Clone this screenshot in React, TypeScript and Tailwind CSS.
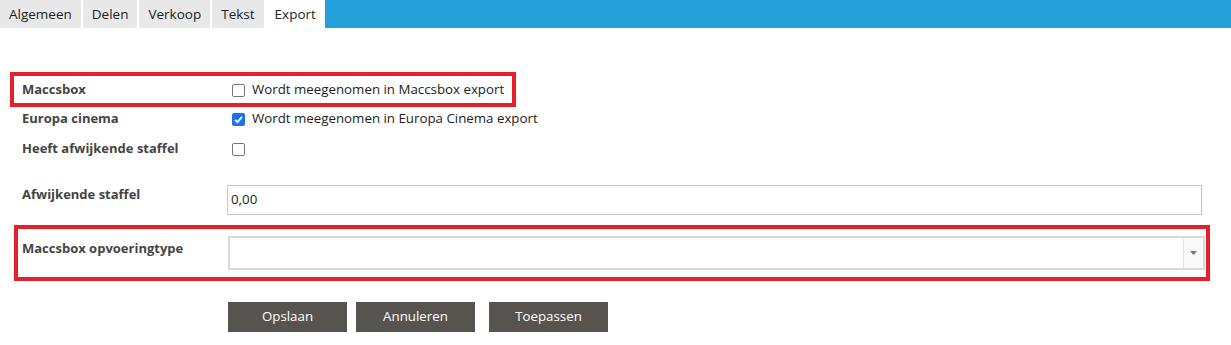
import React from "react";

const font = { fontFamily: '"Open Sans", "Noto Sans", sans-serif' };

function Tab({ label, active }: { label: string; active?: boolean }) {
  return (
    <div
      className={
        "h-full flex items-center text-[13.5px] text-[#222] " +
        (active ? "bg-white px-[9px]" : "bg-[#e8e8e8] px-[9px] border-r-2 border-white")
      }
    >
      {label}
    </div>
  );
}

function Checkbox({ checked }: { checked?: boolean }) {
  return checked ? (
    <span className="w-[13px] h-[13px] rounded-[2px] bg-[#1a73e8] flex items-center justify-center shrink-0">
      <svg width="11" height="11" viewBox="0 0 11 11">
        <path d="M2 5.8 L4.4 8.2 L9 2.8" stroke="white" strokeWidth="1.8" fill="none" />
      </svg>
    </span>
  ) : (
    <span className="w-[13px] h-[13px] rounded-[2px] border border-[#767676] bg-white shrink-0" />
  );
}

export default function App() {
  return (
    <div className="relative w-[1231px] h-[345px] bg-white text-[#333]" style={font}>
      <div className="h-[28px] flex bg-[#259fda]">
        <Tab label="Algemeen" />
        <Tab label="Delen" />
        <Tab label="Verkoop" />
        <Tab label="Tekst" />
        <Tab label="Export" active />
      </div>

      <div className="pl-[22px] pt-[51px]">
        <div className="flex items-center h-[22px]">
          <div className="w-[210px] text-[13px] font-bold text-[#444]">Maccsbox</div>
          <Checkbox />
          <span className="ml-[7px] text-[13.3px] text-[#222]">Wordt meegenomen in Maccsbox export</span>
        </div>
        <div className="flex items-center h-[22px] mt-[7px]">
          <div className="w-[210px] text-[13px] font-bold text-[#444]">Europa cinema</div>
          <Checkbox checked />
          <span className="ml-[7px] text-[13.3px] text-[#222]">Wordt meegenomen in Europa Cinema export</span>
        </div>
        <div className="flex items-center h-[22px] mt-[8px]">
          <div className="w-[210px] text-[13px] font-bold text-[#444]">Heeft afwijkende staffel</div>
          <Checkbox />
        </div>

        <div className="flex mt-[25px]">
          <div className="w-[205px] text-[13px] font-bold text-[#444]">Afwijkende staffel</div>
          <div className="w-[975px] h-[30px] border border-[#c8c8c8] flex items-center px-[3px] text-[13.3px] text-[#222]">
            0,00
          </div>
        </div>

        <div className="flex mt-[21px]">
          <div className="w-[206px] text-[13px] font-bold text-[#444] pt-[3px]">Maccsbox opvoeringtype</div>
          <div className="w-[977px] h-[34px] border-2 border-[#d9d9d9] flex">
            <div className="flex-1" />
            <div className="w-[20px] border-l border-[#e2e2e2] bg-[#fafafa] flex items-center justify-center">
              <svg width="7" height="4" viewBox="0 0 7 4">
                <path d="M0 0 L7 0 L3.5 4 Z" fill="#777" />
              </svg>
            </div>
          </div>
        </div>

        <div className="flex mt-[32px] ml-[206px] gap-[9px]">
          <button className="w-[119px] h-[30px] bg-[#57544f] text-white text-[13.3px]">Opslaan</button>
          <button className="w-[119px] h-[30px] bg-[#57544f] text-white text-[13.3px]">Annuleren</button>
          <button className="w-[119px] h-[30px] bg-[#57544f] text-white text-[13.3px] ml-[5px]">Toepassen</button>
        </div>
      </div>

      <div className="absolute left-[10px] top-[72px] w-[506px] h-[35px] border-[4px] border-[#e3202b] pointer-events-none" />
      <div className="absolute left-[14px] top-[225px] w-[1196px] h-[56px] border-[4px] border-[#e3202b] pointer-events-none" />
    </div>
  );
}
